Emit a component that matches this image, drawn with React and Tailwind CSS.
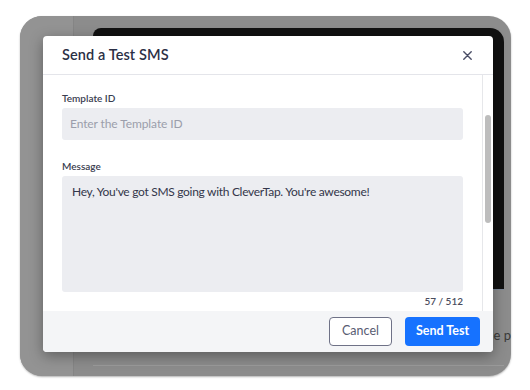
import React from "react";

export default function App() {
  return (
    <div className="w-[530px] h-[390px] bg-white pt-[16px] pl-[20px]" style={{ fontFamily: "Lato, 'Open Sans', sans-serif" }}>
      <div className="relative w-[491px] h-[360px] rounded-[22px] bg-[#8c8c8c] overflow-hidden flex shadow-[0_1px_2px_rgba(0,0,0,0.3)]">
        {/* dimmed sidebar */}
        <div className="w-[54px] h-full bg-[#939393] border-r border-[#858585]" />
        {/* dimmed main */}
        <div className="flex-1 flex flex-col pl-[19px] pt-[12px] pr-[7px]">
          <div className="h-[262px] bg-[#111111] rounded-tl-[8px] rounded-tr-[14px] border-b border-[#7f8a9a]" />
          <div className="flex-1 flex flex-col justify-between">
            <div className="flex justify-end pt-[36px] text-[13px] text-[#3a3a3a] -mr-[7px]">gle p</div>
            <div className="h-px bg-[#9a9a9a] mb-[10px]" />
          </div>
        </div>

        {/* modal */}
        <div className="absolute left-[23px] top-[20px] w-[450px] h-[316px] bg-white rounded-[4px] shadow-[0_4px_14px_rgba(0,0,0,0.35)] flex flex-col overflow-hidden">
          <div className="h-[39px] shrink-0 flex items-center justify-between pl-[19px] pr-[21px] border-b border-[#e4e5ea]">
            <div className="text-[14.5px] font-semibold text-[#2b2f45] tracking-[0.1px]">Send a Test SMS</div>
            <svg width="9" height="9" viewBox="0 0 9 9" className="mt-[1px]">
              <path d="M0.8 0.8L8.2 8.2M8.2 0.8L0.8 8.2" stroke="#4a4e66" strokeWidth="1.4" strokeLinecap="round" />
            </svg>
          </div>
          <div className="flex-1 flex min-h-0">
            <div className="flex-1 pl-[19px] pr-[19px] pt-[16px]">
              <div className="text-[10px] font-semibold text-[#3a3d4f] leading-[14px]">Template ID</div>
              <div className="mt-[3px] h-[32px] rounded-[3px] bg-[#ecedf1] flex items-center px-[8px] text-[12px] tracking-[-0.1px] text-[#9b9eab]">
                Enter the Template ID
              </div>
              <div className="mt-[19px] text-[10px] font-semibold text-[#3a3d4f] leading-[14px]">Message</div>
              <div className="mt-[3px] h-[116px] rounded-[3px] bg-[#ecedf1] px-[10px] pt-[7px] text-[12px] tracking-[-0.3px] text-[#33364a]">
                Hey, You've got SMS going with CleverTap. You're awesome!
              </div>
              <div className="mt-[2px] text-right text-[10px] leading-[14px] text-[#4a4d5e] font-semibold">57 / 512</div>
            </div>
            <div className="w-[11px] border-l border-[#e6e7ea] pt-[40px] pl-[2px]">
              <div className="w-[6px] h-[108px] rounded-full bg-[#bdbdbd]" />
            </div>
          </div>
          <div className="h-[41px] shrink-0 bg-[#f4f5f7] flex items-center justify-end gap-[13px] pr-[13px] pb-[1px]">
            <button className="h-[29px] w-[63px] rounded-[4px] border border-[#6f7287] bg-white text-[12.5px] text-[#585c72]">Cancel</button>
            <button className="h-[29px] w-[75px] rounded-[4px] bg-[#1672ff] text-[12.5px] font-bold text-white">Send Test</button>
          </div>
        </div>
      </div>
    </div>
  );
}
